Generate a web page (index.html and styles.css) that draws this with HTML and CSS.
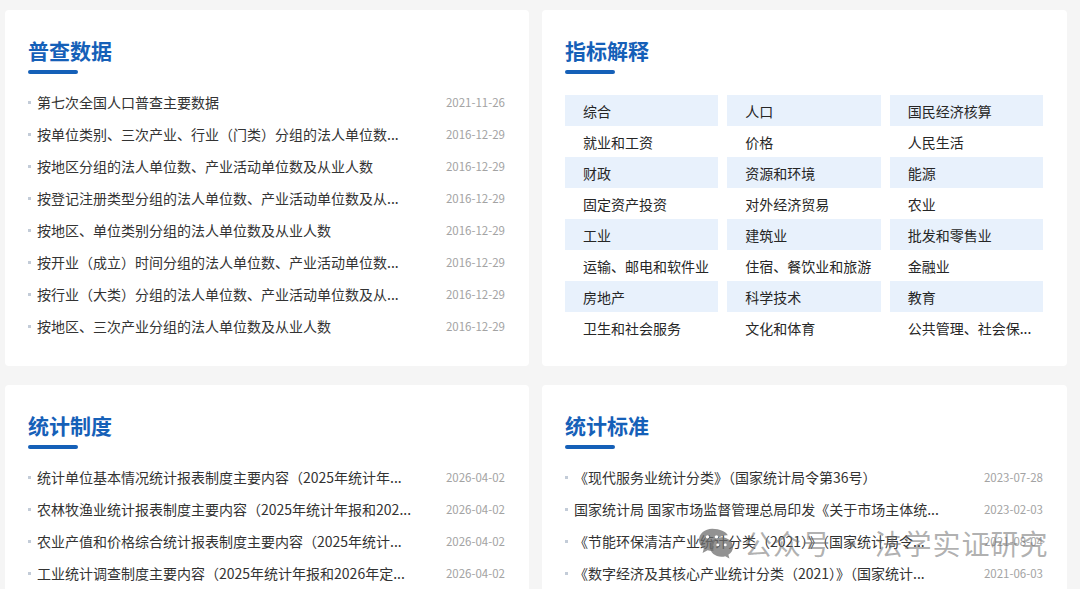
FILE: index.html
```html
<!DOCTYPE html>
<html lang="zh-CN">
<head>
<meta charset="utf-8">
<title>统计数据</title>
<link rel="stylesheet" href="styles.css">
</head>
<body>
<main class="page">
  <section class="card">
    <h2 class="card-title">普查数据</h2>
    <div class="title-bar"></div>
    <ul class="news-list">
      <li><span class="news-title">第七次全国人口普查主要数据</span><span class="news-date">2021-11-26</span></li>
      <li><span class="news-title" title="按单位类别、三次产业、行业（门类）分组的法人单位数及从业人数">按单位类别、三次产业、行业（门类）分组的法人单位数...</span><span class="news-date">2016-12-29</span></li>
      <li><span class="news-title">按地区分组的法人单位数、产业活动单位数及从业人数</span><span class="news-date">2016-12-29</span></li>
      <li><span class="news-title" title="按登记注册类型分组的法人单位数、产业活动单位数及从业人数">按登记注册类型分组的法人单位数、产业活动单位数及从...</span><span class="news-date">2016-12-29</span></li>
      <li><span class="news-title">按地区、单位类别分组的法人单位数及从业人数</span><span class="news-date">2016-12-29</span></li>
      <li><span class="news-title" title="按开业（成立）时间分组的法人单位数、产业活动单位数及从业人数">按开业（成立）时间分组的法人单位数、产业活动单位数...</span><span class="news-date">2016-12-29</span></li>
      <li><span class="news-title" title="按行业（大类）分组的法人单位数、产业活动单位数及从业人数">按行业（大类）分组的法人单位数、产业活动单位数及从...</span><span class="news-date">2016-12-29</span></li>
      <li><span class="news-title">按地区、三次产业分组的法人单位数及从业人数</span><span class="news-date">2016-12-29</span></li>
    </ul>
  </section>

  <section class="card">
    <h2 class="card-title">指标解释</h2>
    <div class="title-bar"></div>
    <div class="topic-grid">
      <span class="topic hl">综合</span><span class="topic hl">人口</span><span class="topic hl">国民经济核算</span>
      <span class="topic">就业和工资</span><span class="topic">价格</span><span class="topic">人民生活</span>
      <span class="topic hl">财政</span><span class="topic hl">资源和环境</span><span class="topic hl">能源</span>
      <span class="topic">固定资产投资</span><span class="topic">对外经济贸易</span><span class="topic">农业</span>
      <span class="topic hl">工业</span><span class="topic hl">建筑业</span><span class="topic hl">批发和零售业</span>
      <span class="topic">运输、邮电和软件业</span><span class="topic">住宿、餐饮业和旅游</span><span class="topic">金融业</span>
      <span class="topic hl">房地产</span><span class="topic hl">科学技术</span><span class="topic hl">教育</span>
      <span class="topic">卫生和社会服务</span><span class="topic">文化和体育</span><span class="topic" title="公共管理、社会保障和社会组织">公共管理、社会保...</span>
    </div>
  </section>

  <section class="card">
    <h2 class="card-title">统计制度</h2>
    <div class="title-bar"></div>
    <ul class="news-list">
      <li><span class="news-title">统计单位基本情况统计报表制度主要内容（2025年统计年...</span><span class="news-date">2026-04-02</span></li>
      <li><span class="news-title">农林牧渔业统计报表制度主要内容（2025年统计年报和202...</span><span class="news-date">2026-04-02</span></li>
      <li><span class="news-title">农业产值和价格综合统计报表制度主要内容（2025年统计...</span><span class="news-date">2026-04-02</span></li>
      <li><span class="news-title">工业统计调查制度主要内容（2025年统计年报和2026年定...</span><span class="news-date">2026-04-02</span></li>
    </ul>
  </section>

  <section class="card">
    <h2 class="card-title">统计标准</h2>
    <div class="title-bar"></div>
    <ul class="news-list">
      <li><span class="news-title">《现代服务业统计分类》（国家统计局令第36号）</span><span class="news-date">2023-07-28</span></li>
      <li><span class="news-title">国家统计局 国家市场监督管理总局印发《关于市场主体统...</span><span class="news-date">2023-02-03</span></li>
      <li><span class="news-title">《节能环保清洁产业统计分类（2021）》（国家统计局令...</span><span class="news-date">2021-08-04</span></li>
      <li><span class="news-title">《数字经济及其核心产业统计分类（2021）》（国家统计...</span><span class="news-date">2021-06-03</span></li>
    </ul>
  </section>
</main>

<div class="watermark">
  <svg class="wm-icon" viewBox="0 0 40 36" width="38" height="34" aria-hidden="true">
    <path d="M16 3C8 3 2 8.3 2 14.8c0 3.7 2 7 5.1 9.1L5.8 28.6l5.3-2.8c1.5.4 3.1.6 4.9.6.5 0 1 0 1.5-.1-.4-1.2-.6-2.4-.6-3.7 0-7.1 6.6-12.800 14.8-12.8h.8C30.9 6.3 24.1 3 16 3z" fill="currentColor"/>
    <path d="M38 22.3c0-5.7-5.5-10.3-12.2-10.3s-12.2 4.6-12.2 10.3 5.5 10.3 12.2 10.3c1.4 0 2.8-.2 4-.6l4.4 2.4-1.1-3.900c3-1.9 4.9-4.8 4.9-8.2z" fill="currentColor"/>
    <circle cx="11" cy="11.5" r="1.8" fill="#fff"/>
    <circle cx="20.5" cy="11.5" r="1.8" fill="#fff"/>
    <circle cx="21.8" cy="20" r="1.5" fill="#fff"/>
    <circle cx="29.8" cy="20" r="1.5" fill="#fff"/>
  </svg>
  <span class="wm-text">公众号 · 法学实证研究</span>
</div>
</body>
</html>
```

FILE: styles.css
```css
html, body {
  margin: 0;
  height: 100%;
  overflow: hidden;
}

body {
  background: #f5f5f5;
  font-family: "Noto Sans CJK SC", "Noto Sans", sans-serif;
  color: #333;
  position: relative;
}

.page {
  display: grid;
  grid-template-columns: 524px 525px;
  grid-template-rows: 356px auto;
  column-gap: 13px;
  row-gap: 19px;
  padding: 10px 0 0 5px;
}

.card {
  background: #fff;
  border-radius: 4px;
  padding: 25px 24px 23px 23px;
}

.card-title {
  margin: 0;
  font-size: 21px;
  line-height: 30px;
  font-weight: 700;
  color: #1560b8;
}

.title-bar {
  width: 50px;
  height: 4px;
  margin-top: 5px;
  border-radius: 2px;
  background: #1560b8;
}

.news-list {
  list-style: none;
  margin: 12px 0 0;
  padding: 0;
}

.news-list li {
  display: flex;
  align-items: center;
  height: 32px;
}

.news-list li::before {
  content: "";
  flex: none;
  width: 3px;
  height: 3px;
  margin-right: 6px;
  background: #c3ccd8;
}

.news-title {
  font-size: 14px;
  color: #333;
  white-space: nowrap;
}

.news-date {
  margin-left: auto;
  font-size: 11.5px;
  color: #a3a3a3;
}

.topic-grid {
  display: grid;
  grid-template-columns: repeat(3, 1fr);
  grid-auto-rows: 31px;
  column-gap: 9px;
  margin-top: 21px;
}

.topic {
  display: flex;
  align-items: center;
  padding-left: 18px;
  font-size: 14px;
  color: #262626;
  white-space: nowrap;
}

.topic.hl {
  background: #e8f1fc;
}

.watermark {
  position: absolute;
  left: 697px;
  top: 526px;
  display: flex;
  align-items: center;
  gap: 9px;
  white-space: nowrap;
  color: rgba(110, 110, 110, 0.55);
  pointer-events: none;
}

.wm-icon {
  color: rgba(110, 110, 110, 0.75);
}

.wm-text {
  font-size: 28px;
  line-height: 34px;
  letter-spacing: 1px;
}
```
